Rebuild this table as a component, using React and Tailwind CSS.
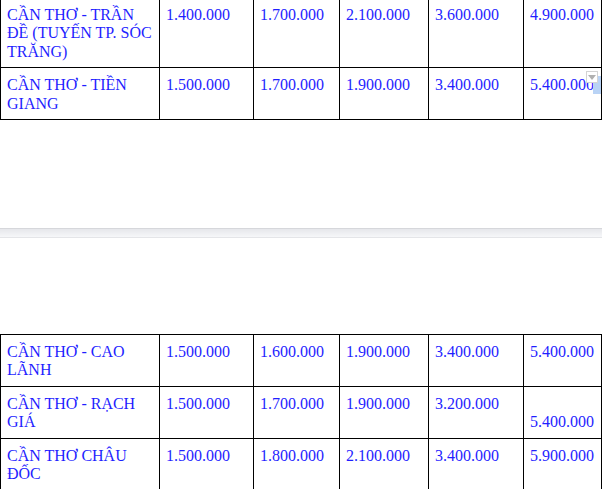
import React from "react";

const cols = "grid grid-cols-[159px_94px_86px_89px_95px_79px]";

function Cell({ children, last, first }) {
  return (
    <div
      className={
        "border-l border-t border-black pl-[6px] pr-[4px] pt-[8px] pb-[6px] leading-[1.15] whitespace-nowrap" +
        (last ? " border-r" : "")
      }
    >
      {children}
    </div>
  );
}

function Row({ name, vals, extraBottom }) {
  return (
    <>
      <Cell>{name}</Cell>
      {vals.map((v, i) => (
        <Cell key={i} last={i === vals.length - 1}>
          {v}
        </Cell>
      ))}
    </>
  );
}

export default function App() {
  return (
    <div
      className="relative h-[489px] w-[602px] overflow-hidden bg-white text-[16px] text-[#1f1fff]"
      style={{ fontFamily: '"Liberation Serif", "Times New Roman", serif' }}
    >
      <div className={cols + " -mt-[3px] border-b border-black"}>
        <Row
          name={
            <>
              CẦN THƠ - TRẦN
              <br />
              ĐỀ (TUYẾN TP. SÓC
              <br />
              TRĂNG)
            </>
          }
          vals={["1.400.000", "1.700.000", "2.100.000", "3.600.000", "4.900.000"]}
        />
        <Row
          name={
            <>
              CẦN THƠ - TIỀN
              <br />
              GIANG
            </>
          }
          vals={["1.500.000", "1.700.000", "1.900.000", "3.400.000", "5.400.000"]}
        />
      </div>

      <div className="mt-[108px] h-[10px] border-t border-b border-t-[#d6d7db] border-b-[#e4e5e8] bg-gradient-to-b from-[#e6e7eb] to-[#f6f7f9]" />

      <div className={cols + " mt-[96px]"}>
        <Row
          name={
            <>
              CẦN THƠ - CAO
              <br />
              LÃNH
            </>
          }
          vals={["1.500.000", "1.600.000", "1.900.000", "3.400.000", "5.400.000"]}
        />
        <Row
          name={
            <>
              CẦN THƠ - RẠCH
              <br />
              GIÁ
            </>
          }
          vals={[
            "1.500.000",
            "1.700.000",
            "1.900.000",
            "3.200.000",
            <>
              <br />
              5.400.000
            </>,
          ]}
        />
        <Row
          name={
            <>
              CẦN THƠ CHÂU
              <br />
              ĐỐC
              <br />
              &nbsp;
            </>
          }
          vals={["1.500.000", "1.800.000", "2.100.000", "3.400.000", "5.900.000"]}
        />
      </div>

      {/* selection highlight + dropdown handle overlay */}
      <div className="absolute left-[593px] top-[76px] h-[18px] w-[8px] bg-[#b9d3f5]" />
      <div className="absolute left-[586px] top-[71px] flex h-[12px] w-[12px] items-center justify-center border border-[#d4d4d4] bg-white">
        <svg width="8" height="5" viewBox="0 0 8 5">
          <path d="M0 0 L8 0 L4 5 Z" fill="#b0b0b0" />
        </svg>
      </div>
    </div>
  );
}
